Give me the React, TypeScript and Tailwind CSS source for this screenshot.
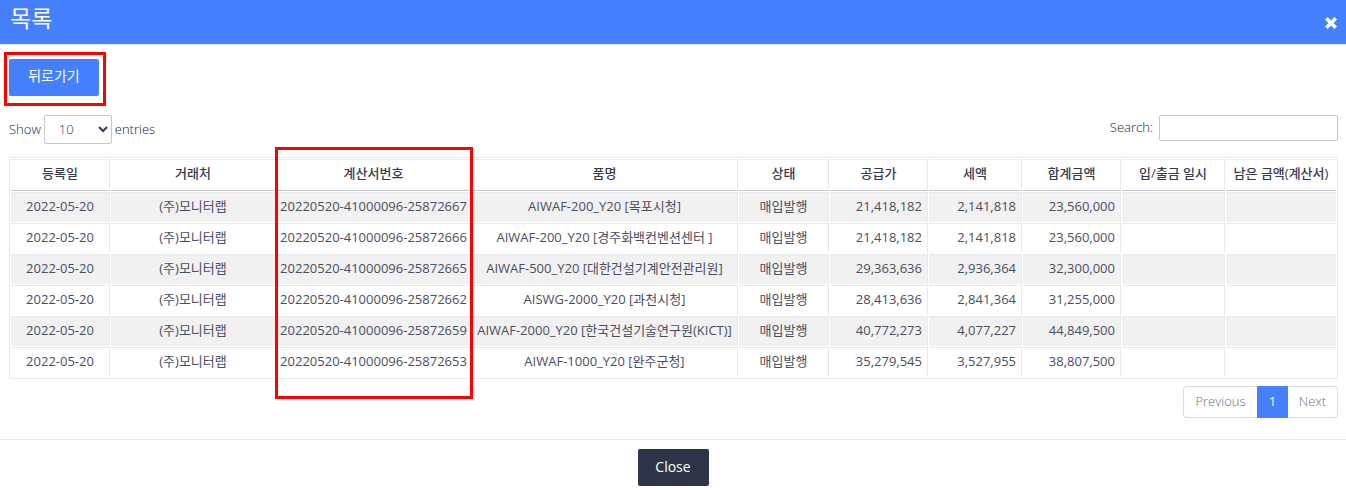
import React from 'react';

type Row = {
  date: string;
  client: string;
  bill: string;
  item: string;
  status: string;
  supply: string;
  tax: string;
  total: string;
};

const client = '(주)모니터랩';
const status = '매입발행';
const date = '2022-05-20';

const rows: Row[] = [
  { date, client, bill: '20220520-41000096-25872667', item: 'AIWAF-200_Y20 [목포시청]', status, supply: '21,418,182', tax: '2,141,818', total: '23,560,000' },
  { date, client, bill: '20220520-41000096-25872666', item: 'AIWAF-200_Y20 [경주화백컨벤션센터 ]', status, supply: '21,418,182', tax: '2,141,818', total: '23,560,000' },
  { date, client, bill: '20220520-41000096-25872665', item: 'AIWAF-500_Y20 [대한건설기계안전관리원]', status, supply: '29,363,636', tax: '2,936,364', total: '32,300,000' },
  { date, client, bill: '20220520-41000096-25872662', item: 'AISWG-2000_Y20 [과천시청]', status, supply: '28,413,636', tax: '2,841,364', total: '31,255,000' },
  { date, client, bill: '20220520-41000096-25872659', item: 'AIWAF-2000_Y20 [한국건설기술연구원(KICT)]', status, supply: '40,772,273', tax: '4,077,227', total: '44,849,500' },
  { date, client, bill: '20220520-41000096-25872653', item: 'AIWAF-1000_Y20 [완주군청]', status, supply: '35,279,545', tax: '3,527,955', total: '38,807,500' },
];

const columns = [
  { title: '등록일', width: 'w-[99px]' },
  { title: '거래처', width: 'w-[165px]' },
  { title: '계산서번호', width: 'w-[194px]', marked: true },
  { title: '품명', width: 'w-[266px]' },
  { title: '상태', width: 'w-[90px]' },
  { title: '공급가', width: 'w-[98px]' },
  { title: '세액', width: 'w-[93px]' },
  { title: '합계금액', width: 'w-[98px]' },
  { title: '입/출금 일시', width: 'w-[103px]' },
  { title: '남은 금액(계산서)', width: 'w-[110px]' },
];

const cell = 'h-[30px] border-t border-r border-[#e9eaec] pt-0 pb-1 last:border-r-0 whitespace-nowrap';

export default function App() {
  return (
    <div className="bg-white font-['Open_Sans','Noto_Sans_CJK_KR',sans-serif] text-[13px] leading-5 font-light text-[#20233a]">
      <header className="flex h-11 items-center justify-between bg-[#4680ff] pr-[7px] pl-[10px] text-white">
        <h1 className="pb-2 text-[23px] leading-8 font-normal">목록</h1>
        <button type="button" aria-label="Close dialog" className="mt-[2px] flex size-4 items-center justify-center">
          <svg viewBox="0 0 12 12" className="size-3" fill="none" stroke="currentColor" strokeWidth="3.6">
            <path d="M1.3 1.3 10.7 10.7M10.7 1.3 1.3 10.7" />
          </svg>
        </button>
      </header>

      <main className="border-t border-[#e9eaec] px-[9px] pt-[14px] pr-2">
        <div className="relative w-fit">
          <button type="button" className="block h-[37px] w-[90px] rounded-xs bg-[#4680ff] pb-1 text-[14px] font-normal text-white">
            뒤로가기
          </button>
          <span className="pointer-events-none absolute -top-[7px] -right-[7px] -bottom-[10px] -left-[5px] border-3 border-[#ff0000]" />
        </div>

        <div className="mt-[19px] flex items-start justify-between">
          <label className="flex items-center gap-[3px]">
            <span className="pb-[2px]">Show</span>
            <select defaultValue="10" className="h-[29px] w-[68px] rounded-xs border border-[#c4c6cb] bg-white pb-[2px] pl-[10px] text-[#373a4f]">
              <option>10</option>
              <option>25</option>
              <option>50</option>
            </select>
            <span className="pb-[2px]">entries</span>
          </label>
          <label className="flex items-center gap-[6px]">
            <span className="pb-[2px]">Search:</span>
            <input type="search" className="h-[26px] w-[179px] rounded-xs border border-[#c4c6cb] bg-white px-2" />
          </label>
        </div>

        <table className="mt-[13px] w-full table-fixed border-separate border-spacing-px border border-[#e9eaec] font-normal">
          <colgroup>
            {columns.map((c) => (
              <col key={c.title} className={c.width} />
            ))}
          </colgroup>
          <thead>
            <tr>
              {columns.map((c) => (
                <th
                  key={c.title}
                  scope="col"
                  className="relative h-8 border-t border-r border-b border-[#e9eaec] border-b-[#c4c6cb] p-0 pb-1 font-medium whitespace-nowrap text-[#373a4f] last:border-r-0"
                >
                  {c.title}
                  {c.marked && (
                    <span className="pointer-events-none absolute -top-[13px] -right-[3px] -left-[2px] z-10 h-[252px] border-3 border-[#ff0000]" />
                  )}
                </th>
              ))}
            </tr>
          </thead>
          <tbody>
            {rows.map((r) => (
              <tr key={r.bill} className="text-center text-[#4b4e60] odd:bg-[#f1f1f1]">
                <td className={cell}>{r.date}</td>
                <td className={cell}>{r.client}</td>
                <td className={cell}>{r.bill}</td>
                <td className={cell}>{r.item}</td>
                <td className={cell}>{r.status}</td>
                <td className={`${cell} pr-[5px] text-right`}>{r.supply}</td>
                <td className={`${cell} pr-[5px] text-right`}>{r.tax}</td>
                <td className={`${cell} pr-[5px] text-right`}>{r.total}</td>
                <td className={cell} />
                <td className={cell} />
              </tr>
            ))}
          </tbody>
        </table>

        <nav aria-label="Pages" className="mt-[7px] flex justify-end text-[#6b737b]">
          <a href="#previous" className="flex h-8 w-[74px] items-center justify-center rounded-l border border-r-0 border-[#dddddd] pb-[2px]">
            Previous
          </a>
          <a href="#1" aria-current="page" className="flex h-8 w-[31px] items-center justify-center bg-[#4680ff] pb-[2px] font-normal text-white">
            1
          </a>
          <a href="#next" className="flex h-8 w-[50px] items-center justify-center rounded-r border border-l-0 border-[#dddddd] pb-[2px]">
            Next
          </a>
        </nav>
      </main>

      <footer className="mt-[21px] flex justify-center border-t border-[#e9eaec] pt-[9px] pb-1">
        <button type="button" className="h-[37px] w-[71px] rounded-xs bg-[#2f3548] pb-[2px] text-[14px] font-medium text-white">
          Close
        </button>
      </footer>
    </div>
  );
}
